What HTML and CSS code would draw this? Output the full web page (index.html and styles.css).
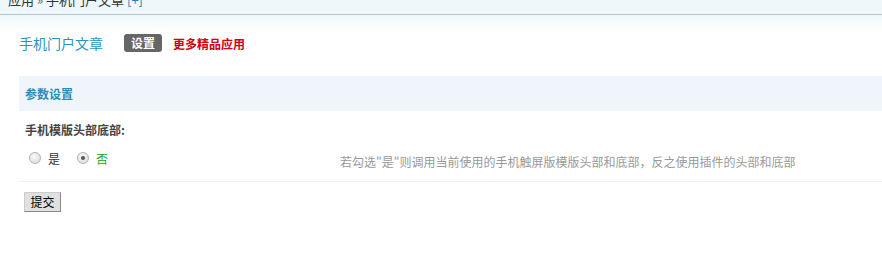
FILE: index.html
```html
<!DOCTYPE html>
<html lang="zh-CN">
<head>
<meta charset="utf-8">
<title>手机门户文章</title>
<link rel="stylesheet" href="styles.css">
</head>
<body>
<div class="topbar">
  <div class="crumb">应用 <span class="sep">»</span> 手机门户文章 <span class="add">[+]</span></div>
</div>
<div class="fade"></div>
<div class="titlerow">
  <span class="apptitle">手机门户文章</span>
  <span class="badge">设置</span>
  <a class="more">更多精品应用</a>
</div>
<div class="section">
  <div class="sechead">参数设置</div>
  <div class="label">手机模版头部底部:</div>
  <div class="optrow">
    <div class="opts">
      <span class="radio"></span><span class="opt">是</span>
      <span class="radio checked"></span><span class="opt on">否</span>
    </div>
    <div class="tip">若勾选"是"则调用当前使用的手机触屏版模版头部和底部，反之使用插件的头部和底部</div>
  </div>
  <div class="btnrow"><button class="btn">提交</button></div>
</div>
</body>
</html>
```
FILE: styles.css
```css
html, body { margin: 0; padding: 0; background: #fff; }
body {
  font-family: "Noto Sans CJK SC", "Liberation Sans", sans-serif;
  font-size: 12px;
  color: #333;
  overflow: hidden;
}
.topbar {
  height: 14px;
  background: #eef8fb;
  border-bottom: 1px solid #b4c6ca;
  overflow: hidden;
}
.crumb {
  margin-top: -7px;
  padding-left: 8px;
  line-height: 14px;
  font-size: 13px;
  color: #333;
}
.crumb .sep { color: #666; }
.crumb .add { color: #2a7fb8; }
.fade {
  height: 16px;
  background: linear-gradient(#eef8fb, #ffffff);
}
.titlerow {
  display: flex;
  align-items: center;
  height: 20px;
  margin-top: 2px;
  padding-left: 19px;
}
.apptitle {
  font-size: 14px;
  color: #2b93bb;
  margin-right: 21px;
}
.badge {
  background: #666;
  color: #fff;
  font-weight: bold;
  font-size: 12px;
  border-radius: 3px;
  height: 18px;
  line-height: 18px;
  padding: 0 7px;
  margin-right: 11px;
}
.more {
  color: #d00012;
  font-weight: bold;
  font-size: 12px;
}
.section {
  margin-top: 23px;
  margin-left: 19px;
}
.sechead {
  height: 35px;
  line-height: 35px;
  background: #eff5fb;
  padding-left: 6px;
  color: #2a8cb8;
  font-weight: bold;
}
.label {
  padding: 10px 0 0 6px;
  line-height: 18px;
  font-weight: bold;
  color: #444;
}
.optrow {
  display: grid;
  grid-template-columns: 315px 1fr;
  padding: 9px 0 9px 6px;
  border-bottom: 1px solid #f0f0f0;
}
.opts {
  display: flex;
  align-items: center;
  height: 20px;
  padding-left: 4px;
}
.radio {
  width: 10px;
  height: 10px;
  border-radius: 50%;
  border: 1px solid #b4b4b4;
  background: radial-gradient(circle at 40% 35%, #fafafa, #d6d6d6);
  margin-right: 7px;
  display: flex;
  align-items: center;
  justify-content: center;
}
.radio.checked::after {
  content: "";
  width: 4px;
  height: 4px;
  border-radius: 50%;
  background: #555;
}
.opt { margin-right: 17px; color: #333; }
.opt.on { color: #19a319; }
.tip {
  color: #999;
  line-height: 20px;
  padding-top: 4px;
}
.btnrow { padding: 10px 0 0 5px; }
.btn {
  font-family: "Noto Sans CJK SC", "Liberation Sans", sans-serif;
  font-size: 12px;
  height: 20px;
  width: 37px;
  padding: 0;
  line-height: 16px;
  background: #e0e0e0;
  border: 1px solid #888;
  border-top-color: #ccc;
  border-left-color: #ccc;
  color: #000;
}
```
